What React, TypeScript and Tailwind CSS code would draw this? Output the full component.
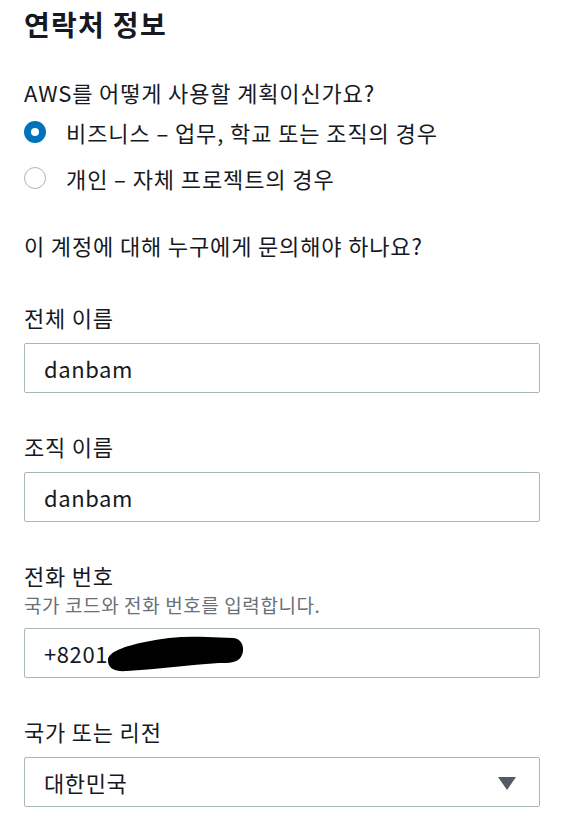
import React from "react";

const font = { fontFamily: '"Noto Sans CJK KR", "Noto Sans", sans-serif' };

function Field({ label, value, hint, className = "" }: { label: string; value: React.ReactNode; hint?: string; className?: string }) {
  return (
    <div className={"flex flex-col " + className}>
      <div className="text-[22px] leading-[30px] tracking-[0.8px] text-[#16191f]">{label}</div>
      {hint && <div className="mt-[3px] text-[19px] leading-[24px] tracking-[0.6px] text-[#687078]">{hint}</div>}
      <div className="mt-[11px] h-[50px] border border-[#aab7b8] rounded-[2px] flex items-center pl-[19px] pr-[23px] text-[22px] tracking-[0.6px] text-[#16191f]">
        {value}
      </div>
    </div>
  );
}

export default function App() {
  return (
    <div style={font} className="w-[564px] h-[836px] bg-white px-[24px] pt-[6px] text-[#16191f]">
      <h1 className="text-[28px] leading-[36px] font-bold tracking-[1.3px]">연락처 정보</h1>
      <div className="mt-[35px] text-[22px] leading-[30px] tracking-[0.85px]">AWS를 어떻게 사용할 계획이신가요?</div>
      <div className="mt-[10px] flex flex-col gap-[16px]">
        <label className="flex items-center gap-[20px] text-[22px] leading-[30px] tracking-[0.9px]">
          <span className="w-[22px] h-[22px] rounded-full border-[7px] border-[#0073bb] bg-white" />
          비즈니스 – 업무, 학교 또는 조직의 경우
        </label>
        <label className="flex items-center gap-[20px] text-[22px] leading-[30px] tracking-[0.9px]">
          <span className="w-[22px] h-[22px] rounded-full border-[1.5px] border-[#aab7b8] bg-white" />
          개인 – 자체 프로젝트의 경우
        </label>
      </div>
      <div className="mt-[37px] text-[22px] leading-[30px] tracking-[0.85px]">이 계정에 대해 누구에게 문의해야 하나요?</div>
      <div className="mt-[42px] flex flex-col gap-[38px]">
        <Field label="전체 이름" value="danbam" />
        <Field label="조직 이름" value="danbam" />
        <Field
          label="전화 번호"
          hint="국가 코드와 전화 번호를 입력합니다."
          value={
            <span className="flex items-center">
              +8201
              <svg width="138" height="36" viewBox="0 0 138 36" className="-ml-[1px] mt-[1px]">
                <path d="M1 24 C 1 16, 18 10, 38 6 C 58 1, 80 0, 100 1 L 126 2 C 137 3, 138 15, 134 21 C 130 27, 122 27, 112 27 C 82 29, 52 33, 20 35 C 5 36, 1 31, 1 24 Z" fill="#000" />
              </svg>
            </span>
          }
        />
        <Field
          label="국가 또는 리전"
          value={
            <span className="flex items-center justify-between w-full">
              대한민국
              <svg width="18" height="13" viewBox="0 0 18 13" className="mt-[2px]"><path d="M0 0 H18 L9 13 Z" fill="#545b64" /></svg>
            </span>
          }
        />
      </div>
    </div>
  );
}
